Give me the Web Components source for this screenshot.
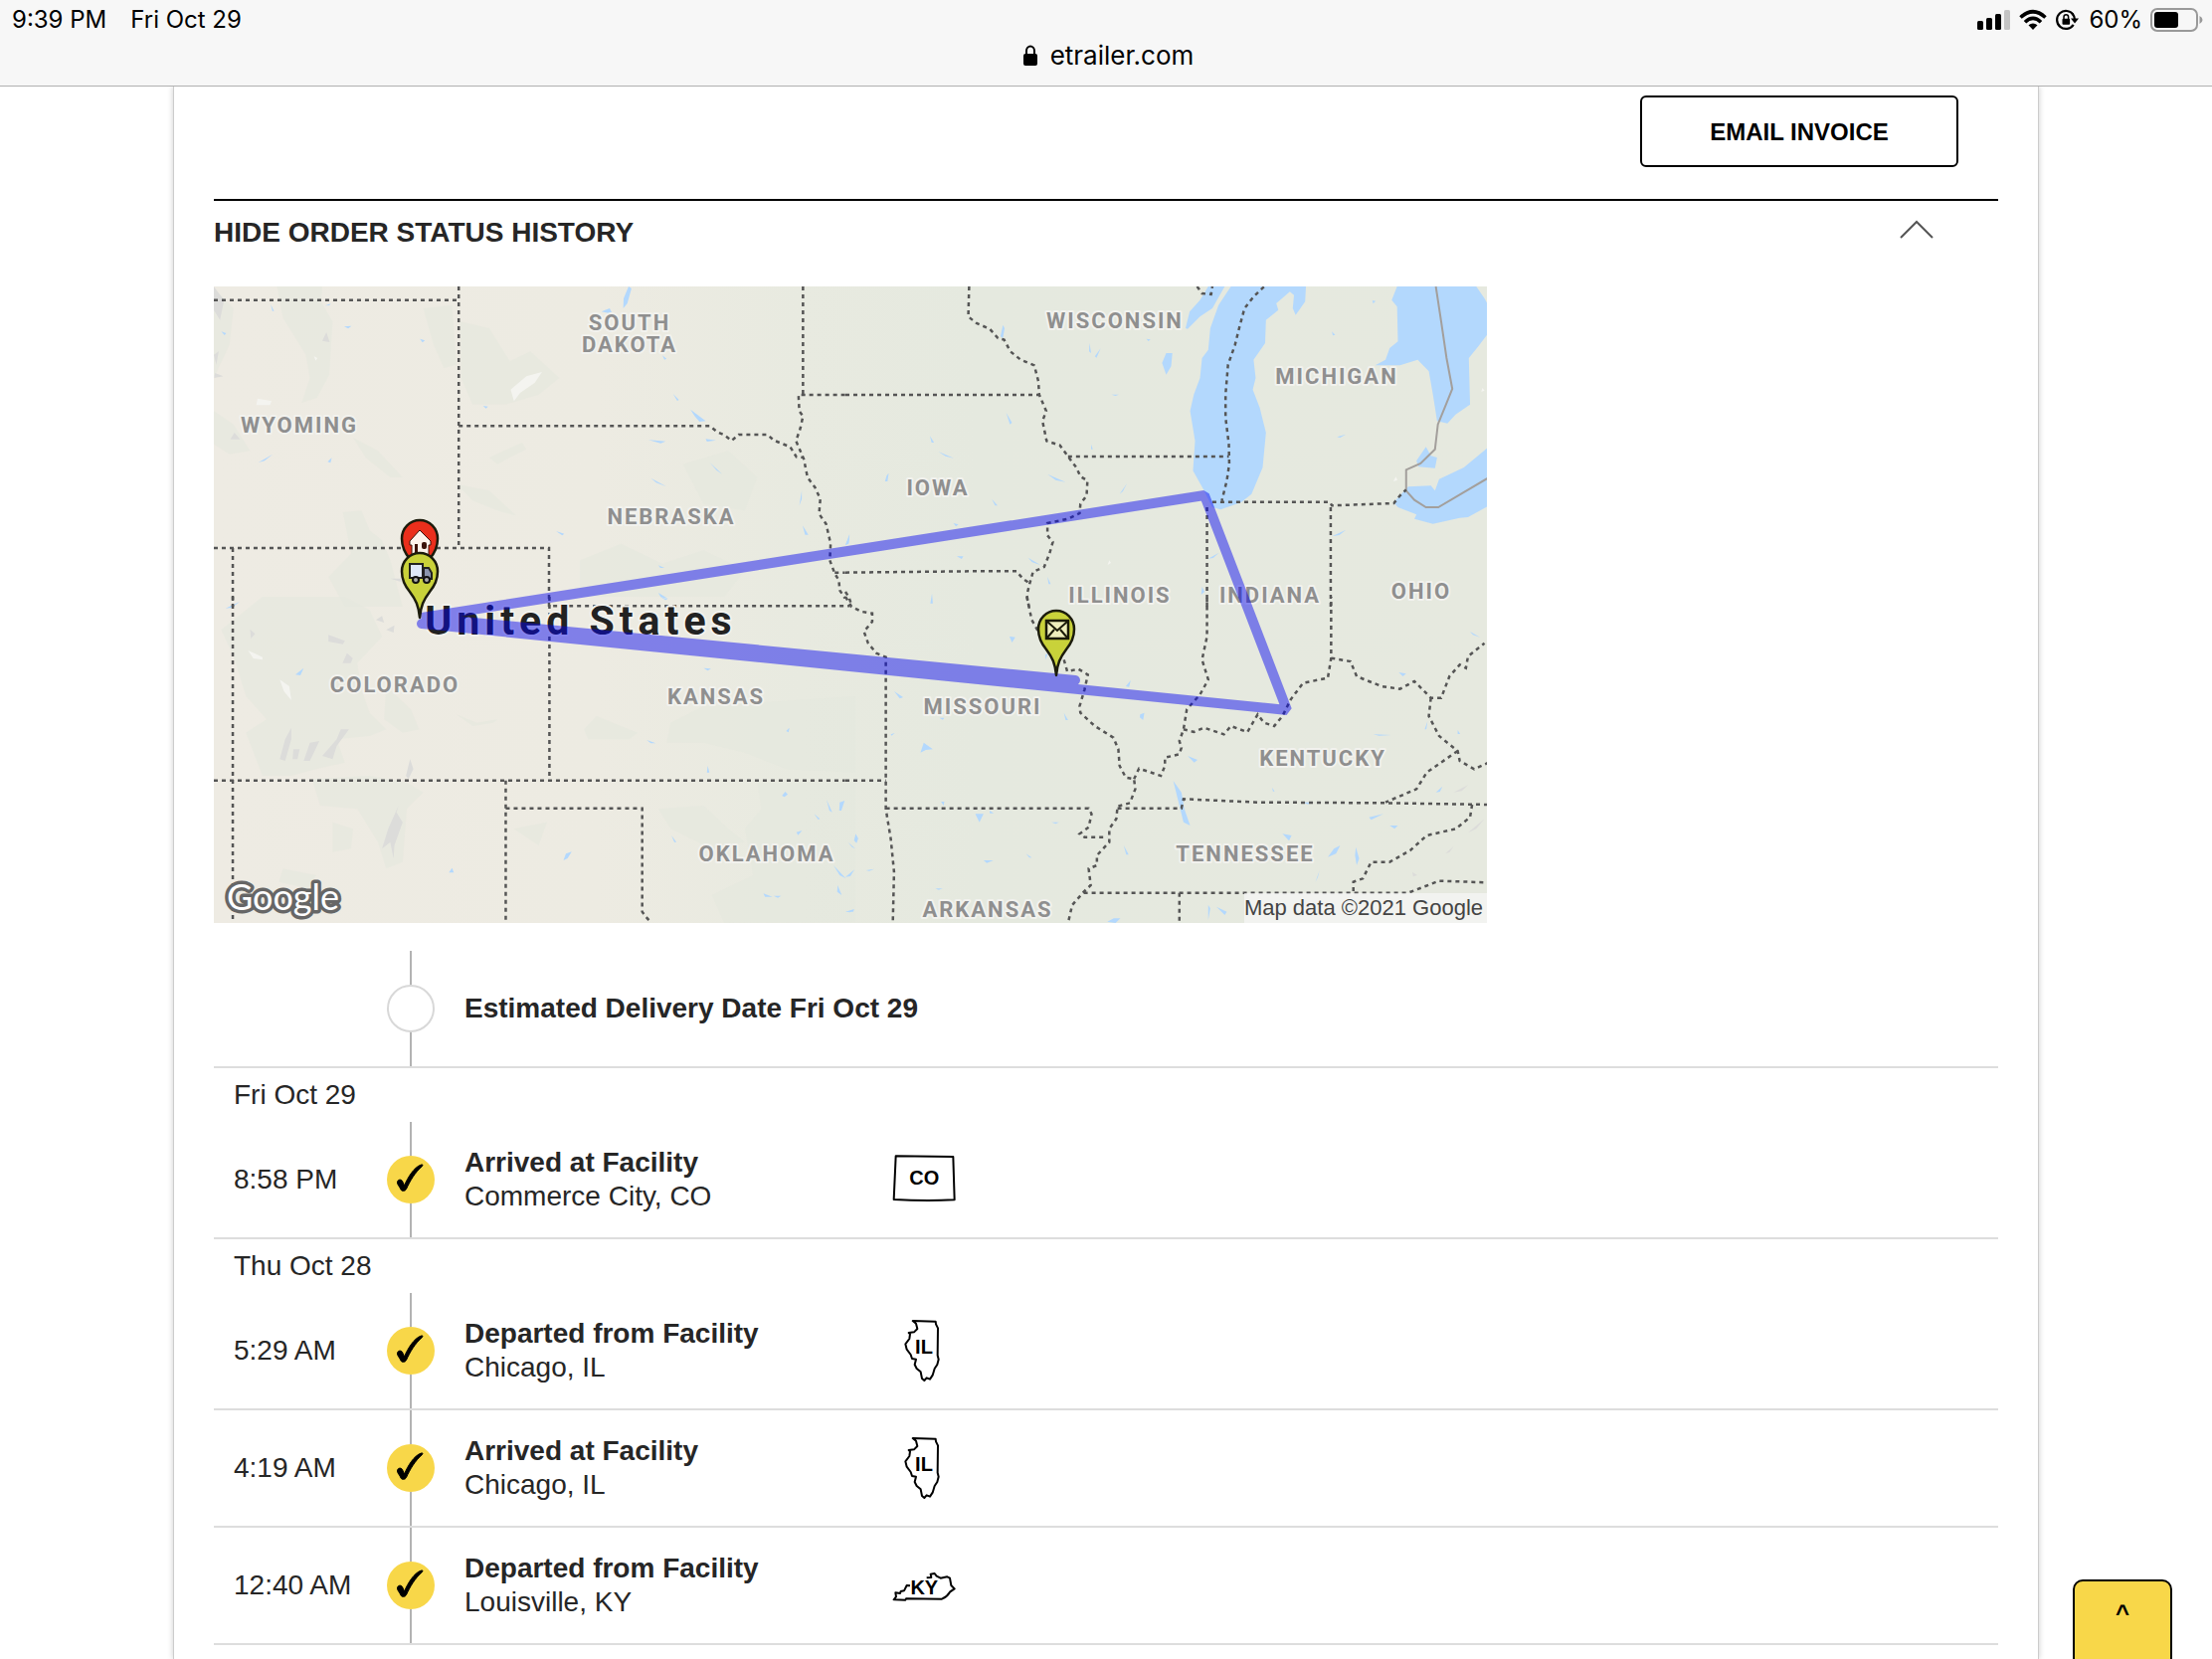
<!DOCTYPE html>
<html lang="en">
<head>
<meta charset="utf-8">
<meta name="viewport" content="width=device-width, initial-scale=1">
<title>Order status - etrailer.com</title>
<style>
  html, body { margin: 0; height: 100%; }
  body {
    display: flex; flex-direction: column; min-height: 100vh; overflow: hidden;
    background: #fff; color: #262626;
    font: 28px/34px "Liberation Sans", Arial, sans-serif;
  }
</style>
</head>
<body>
<browser-bar time="9:39 PM" date="Fri Oct 29" battery="60%">etrailer.com</browser-bar>
<order-card>
  <invoice-button slot="actions">EMAIL INVOICE</invoice-button>
  <history-panel label="HIDE ORDER STATUS HISTORY">
    <route-map></route-map>
    <history-day>
      <history-event pending heading="Estimated Delivery Date Fri Oct 29"></history-event>
    </history-day>
    <history-day date="Fri Oct 29">
      <history-event time="8:58 PM" heading="Arrived at Facility" state="CO">Commerce City, CO</history-event>
    </history-day>
    <history-day date="Thu Oct 28">
      <history-event time="5:29 AM" heading="Departed from Facility" state="IL">Chicago, IL</history-event>
      <history-event time="4:19 AM" heading="Arrived at Facility" state="IL">Chicago, IL</history-event>
      <history-event time="12:40 AM" heading="Departed from Facility" state="KY">Louisville, KY</history-event>
    </history-day>
  </history-panel>
</order-card>
<back-to-top></back-to-top>

<script>
class Base extends HTMLElement {
  connectedCallback() {
    if (!this.shadowRoot) this.attachShadow({ mode: 'open' }).innerHTML = this.render();
  }
  attr(name) { return this.getAttribute(name) || ''; }
}

customElements.define('browser-bar', class extends Base {
  render() {
    return `
<style>
  :host { display: block; flex: none; box-sizing: border-box; height: 87px; background: #f7f7f7;
    border-bottom: 1px solid #b0b0b0; color: #000; font-family: Inter, sans-serif; }
  .status { display: flex; align-items: center; justify-content: space-between; height: 40px; padding: 0 8px 0 12px; font-size: 24px; line-height: 30px; }
  .left { display: flex; gap: 24px; }
  .right { display: flex; align-items: center; gap: 8px; }
  .pct { margin-left: 2px; }
  .address { display: flex; align-items: center; justify-content: center; gap: 12px; height: 32px; padding-left: 4px; font-size: 26px; line-height: 32px; }
  svg { display: block; }
</style>
<div class="status">
  <div class="left"><span>${this.attr('time')}</span><span>${this.attr('date')}</span></div>
  <div class="right">
    <svg width="34" height="22" viewBox="0 0 34 22"><rect x="0" y="12" width="6" height="9" rx="1.500"/><rect x="9" y="9" width="6" height="12" rx="1.500"/><rect x="18" y="5" width="6" height="16" rx="1.500"/><rect x="27" y="1" width="6" height="20" rx="1.500" fill="#c4c4c4"/></svg>
    <svg width="28" height="22" viewBox="0 0 28 22" fill="none" stroke="#000" stroke-width="3.600"><path d="M1.500 8.500Q14-3 26.500 8.500M6 13.200Q14 5.500 22 13.200"/><path d="M14 21 9.500 16.300Q14 12.500 18.500 16.300Z" fill="#000" stroke="none"/></svg>
    <svg width="24" height="22" viewBox="0 0 24 22"><path d="M18.500 5.800A9 9 0 1 0 18.700 15.800" fill="none" stroke="#000" stroke-width="2.200"/><path d="M16 9.500h8l-4 5z"/><path d="M19.900 10.500A9 9 0 0 0 17.600 4.800" fill="none" stroke="#000" stroke-width="2.200"/><rect x="7.500" y="9.800" width="7.600" height="6" rx="1"/><path d="M9 10V8a2.300 2.300 0 0 1 4.600 0v2" fill="none" stroke="#000" stroke-width="1.500"/></svg>
    <span class="pct">${this.attr('battery')}</span>
    <svg width="54" height="26" viewBox="0 0 54 26"><rect x="1" y="2" width="46" height="22" rx="6" fill="none" stroke="#999" stroke-width="2"/><rect x="4" y="5" width="24" height="16" rx="3"/><path d="M49.500 9q3 1.500 3 4t-3 4z" fill="#999"/></svg>
  </div>
</div>
<div class="address">
  <svg width="16" height="22" viewBox="0 0 16 22"><rect x="1" y="9" width="14" height="12" rx="2"/><path d="M4 10V6a4 4.500 0 0 1 8 0v4" fill="none" stroke="#000" stroke-width="2"/></svg>
  <slot></slot>
</div>`;
  }
});

customElements.define('order-card', class extends Base {
  render() {
    return `
<style>
  :host { display: block; flex: 1 0 auto; box-sizing: border-box; width: calc(100% - 348px); margin: 0 auto; padding: 9px 40px 0;
    border: solid #ccc; border-width: 0 1px; box-shadow: 0 0 6px rgba(0,0,0,.2); clip-path: inset(0 -10px); }
  .actions { display: flex; justify-content: flex-end; padding: 0 40px 32px; }
</style>
<div class="actions"><slot name="actions"></slot></div>
<slot></slot>`;
  }
});

customElements.define('invoice-button', class extends Base {
  render() {
    return `
<style>
  :host { display: block; }
  button { display: block; width: 320px; height: 72px; padding: 2px 0 0; border: 2px solid #000; border-radius: 6px; background: #fff;
    color: #000; font: bold 24px/30px "Liberation Sans", Arial, sans-serif; }
</style>
<button type="button"><slot></slot></button>`;
  }
});

customElements.define('history-panel', class extends Base {
  render() {
    return `
<style>
  :host { display: block; border-top: 2px solid #000; }
  button { display: flex; justify-content: space-between; align-items: center; width: 100%; padding: 15px 65px 37px 0; border: 0;
    background: none; color: inherit; font: bold 28px/34px "Liberation Sans", Arial, sans-serif; text-align: left; }
  svg { display: block; }
</style>
<button type="button" aria-expanded="true">${this.attr('label')}
  <svg width="34" height="28" viewBox="0 0 34 28" fill="none" stroke="#555" stroke-width="2"><path d="M1 19 17 3 33 19"/></svg>
</button>
<slot></slot>`;
  }
});

customElements.define('route-map', class extends Base {
  render() {
    const sx = 650 / 1568, sy = 1 / 3;
    const sheets = {
      nw: { at: [-5, -8],
        borders: 'M12 65H606M606 24V814M606 445H1215L1232 462 1250 472 1268 489 1285 471 1355 471 1370 488 1410 508 1425 538 1443 540M1441 24V350M1543 351H1430L1432 400 1441 415 1435 450 1424 490 1443 545 1452 600 1470 630 1483 665 1480 710 1497 740 1508 800 1506 850 1518 890 1528 910 1530 940 1543 965M12 813H825V990M58 813V990M1518 887H1543M835 988H1555',
        green: 'M165 24L275 24 272 70 300 130 292 290 262 360 225 375 245 300 235 230 180 120ZM520 90L590 80 600 260 570 270 545 200ZM610 130L680 150 730 250 780 220 850 300 800 350 720 380 640 380 612 300ZM350 480L410 520 470 600 440 600 380 540ZM600 620L680 640 745 715 700 700 640 670ZM680 540L760 495 770 515 700 560ZM325 705L370 700 390 760 420 790 440 850 470 990 330 990 290 900 345 830ZM12 30L60 90 50 200 12 300ZM12 400L60 440 100 520 50 530 12 500ZM900 850L1000 800 1100 860 1200 820 1300 880 1250 960 900 960ZM1150 560L1260 520 1330 600 1300 700 1200 680Z',
        snow: 'M808 282L770 295 732 335 740 370 755 345 790 315ZM118 362L152 370 148 382 115 382ZM255 235l8 5-4 8z',
        grey: 'M285 162l8 30-18-4zM62 465l14 20-24 0zM12 25l25 40-10 60-15-30zM12 230l12-10-6 40zM15 285l20 10-22 5zM440 905h26v10z',
        water: 'M1018 24L1025 30 1015 75 1005 90 1006 60ZM952 100l20-10 5 12-8 2zM1100 232l10 10-5 3zM30 160l12 5-4 6zM150 78l8 20-4 0zM282 82l14-6-4 5zM328 145l18-2-8 8zM512 182l12 5-6 6zM665 384l12 2-5 6zM1126 348l14 18-4 3zM1168 395L1205 430 1190 432 1178 415ZM1066 487l42 4-12 6zM1205 484l25 4-22 4zM120 555l35-25-20 20zM288 553l10-12-3 15zM1072 602l38 26-25-12zM1215 555l30 35-14-12zM1438 640l0 25-6 20zM1440 745l14 28-8 0zM1554 775l-2 22-8 6zM842 762l20 8-5 5zM1090 865l15 8-10 0zM1090 948l24 18-18-5z' },
      ne: { at: [635, -8],
        borders: 'M0 351H472M300 24L298 115 318 135 350 152 370 180 385 185 400 220 425 245 458 262 468 310 470 350 487 400 478 430 488 490 520 503 540 537 560 570 570 597 587 610 585 655 570 680 568 708 540 725 490 738 490 775 503 795 495 830 482 870 455 885 447 920 440 955 445 990M540 537H930M1015 25L990 55 968 90 955 150 945 200 928 260 922 350 922 420 930 500 931 560 925 610 913 670M890 674H1175L1180 685 1330 678 1345 655 1360 637M877 690V990M1177 690V990M0 887L305 883H415L430 905 447 920M853 24L865 45 887 48 890 24M0 945L8 960 15 985',
        coast: 'M1432 24L1445 130 1458 240 1472 333 1455 385 1437 440 1430 515 1395 558 1360 577 1360 640 1380 668 1408 690H1438L1568 595',
        water: 'M935 24H1117L1115 70 1092 110 1085 90 1088 50 1078 40 1045 75 1050 95 1020 125 1018 195 990 245 995 300 988 335 1005 390 1020 465 1012 570 985 650 960 675 910 697 890 690 870 640 843 580 848 490 836 400 845 350 860 300 865 240 880 215 885 150 905 80ZM880 24H920L890 90 860 115 830 152 825 150 835 100 860 65ZM1338 24H1530L1550 60 1568 100V150L1535 205 1512 240 1515 380 1480 410 1460 437 1435 430 1425 350 1415 280 1388 245 1345 262H1285L1310 245 1320 210 1340 190 1338 85 1325 65ZM1408 508L1420 535 1435 540 1430 572 1390 568 1385 550ZM1365 628L1420 625 1430 640 1440 605 1500 570 1568 500V680L1510 720 1490 722 1425 740 1380 725 1385 712 1340 690 1330 675ZM778 225L793 225 790 265 778 290 768 255ZM1278 66l8 2-6 8zM1180 160l8 10-6 2zM730 182l10 2-5 5zM605 235l14-24-10 28zM592 195l4 30-5-5zM645 350l18 0-8 4zM382 140l4 10-4 30-6-5zM390 405l14 30-5 5zM205 475l10 20-6 0zM100 595l5-8-3 25-6 0zM225 522l38 20-20-6zM490 590l44 24-24-6zM665 650l18-32-10 24zM596 500l4 15-4 0zM1192 478l22-8-14 10zM1180 778l34-20-16 16zM10 770l-2 30-8 5zM262 738l12 4-6 6zM270 838l16 0-4 8zM355 665l14 20-6 0zM490 900l8 22-5 0zM880 845l26-18-14 16zM443 842l30 22-20-8zM210 950l2 30-6 0zM865 930l6 15-8 8z',
        grey: '', snow: 'M1545 330l5 8-8 4zM1335 598l4 10-10 4zM640 850l4 8-8 6z', green: '' },
      sw: { at: [-5, 312],
        borders: 'M58 0V984M826 0V554M12 554H1543M720 554V984M720 638H1051V950L1060 965 1073 984',
        green: 'M130 0L330 0 390 40 420 120 360 200 370 280 390 350 430 400 390 420 310 430 330 500 260 520 200 540 130 540 90 410 140 370 90 300 60 180 30 100ZM430 270L490 340 510 400 470 410 425 370ZM250 550L390 540 480 560 520 590 480 640 470 800 430 820 410 740 360 640 270 630ZM300 680L350 700 345 760 300 770ZM910 400L940 360 1040 410 1020 430 920 430ZM1120 380L1200 330 1330 320 1568 300V530L1400 520 1300 470 1200 440 1110 440ZM1330 560L1568 560V980L1250 984 1220 900 1320 840 1300 700 1340 640ZM1090 640L1200 630 1260 700 1300 740 1220 760 1120 700ZM740 700L820 680 800 750ZM600 355L650 380 700 370 690 380 640 390ZM180 820L260 840 240 880 170 860Z',
        snow: 'M95 162L130 182 130 190 108 186ZM172 250L195 270 200 312 182 285Z',
        grey: 'M335 170l14 15-5 15-20 0zM405 70l15-12 5 20zM290 115l40 18-5 10-35-8zM430 100l20-14-2 22zM100 98l12 14-10 14zM172 490L185 430 200 395 200 430 185 495ZM230 495L245 440 268 435 245 495ZM275 480L310 430 320 400 340 400 310 450 300 490ZM488 490l8 30-12 30-6-10zM460 630L455 650 470 680 450 750 448 790 440 740 420 760 435 700ZM205 460l15 0-5 30-12 0z',
        water: 'M210 235l20-20-8 22zM40 35l35-20-20 18zM1200 215l18 2-8 6zM1400 405l8-10-2 14zM1062 432l22 10-12 0zM1210 510l4 20-6 0zM1390 600l8-12 6 8-8 8zM1498 612L1512 650 1505 645ZM1530 620l12-5-8 30-5 0zM1468 655l14 15-4 2zM1425 710l14-5-10 14zM1122 720l12 20-5 0zM860 795l6-20 14-6-10 20zM582 832l8-14 4 14zM1515 810L1545 850 1530 840ZM1525 870L1535 900 1524 890ZM1345 895l22 10-18 0zM1370 902l18 0-8 6zM1545 950l20-8-2 8zM1550 740l18 20-8-5zM1095 0l18 8-6 2z' },
      se: { at: [635, 312],
        borders: 'M0 554H98M0 0L15 30 40 45 65 50 65 75 45 105 55 140 75 170 98 182V640L110 730 118 830 115 984M98 638H590L597 655 590 695 568 715 580 725H635M440 0L452 70 470 110M530 190L538 225 565 218 588 235 580 280 568 330 570 350 605 390 650 425 662 460 665 510 680 545 700 550 703 580 690 622 660 632 657 670 640 700 640 740 610 780 610 810 590 820 595 870 578 890 550 930 540 984M700 550L712 518 765 540 775 510 775 485 810 475 815 455 810 435 820 400 828 340 860 295 880 250 865 190 877 120V0M820 400L845 408 870 395 918 415 935 390 975 408 1000 355 1015 380 1040 390 1060 360 1080 310 1110 260 1170 245 1178 185V0M1178 185L1225 195 1240 240 1300 270 1345 278 1380 255 1420 305 1445 305 1465 240 1490 205 1505 215 1510 180 1550 140M1420 305L1415 360 1440 420 1485 465 1490 495 1525 520 1560 500M1485 465L1410 530 1385 580 1310 620M660 638H815L820 610 1000 620 1310 622 1560 627M1520 627L1515 665 1480 700 1410 720 1370 765 1320 800 1275 800 1255 850 1232 860 1232 892M578 893H1365L1440 857 1560 862M810 893V984',
        green: '', snow: '',
        grey: 'M1475 590l35-22-15 18zM1510 712L1550 670 1530 700ZM1455 775l20-22-10 18zM1375 830l12 10-10 4z',
        water: 'M182 470L190 440 212 460 195 462ZM715 355l10-5-3 22-8-8zM398 120l14 2-8 16zM118 285l22 18-8 4zM680 270l12-18-4 20zM795 555L815 590 822 640 836 690 820 680 812 640ZM530 350l10 22-6 0zM830 480l24 12-8 8zM1342 228l18 4-8 8zM1060 715l22 5-6 16zM1170 785L1185 760 1200 750 1190 775ZM1238 755L1246 790 1240 810 1236 780ZM1140 860l10-35-4 20zM1270 665l35-10-30 18zM1320 690l20 0-8 10zM675 750l12 28-6 0zM315 655L335 655 325 680ZM350 645l10 8-10 0zM500 680l18 0-8 5zM232 618l8 0-2 12zM25 715l6 14-4 14-6-8zM0 845l22-22-10 20zM50 825l20-4-12 6zM335 795l24 0-16 8zM548 830l-5 20zM438 775l14 12-6 0zM218 880l18 0-10 4zM0 950l20-6-8 8zM635 980l16-10 16 0-12 14zM880 930l5 10-5 35zM900 935L925 950 920 960ZM1110 620l20 0-8 6zM1280 415l44 2-30 2zM1412 375l-3 25-4 0zM1035 575l6 12-4 0zM1515 105l25 18-18-8zM1432 590l16-18-6 16zM485 190l0-15 6-3zM1485 402l6 12-6 0zM110 415l10-4-8 8zM228 365l12 0-4 6z' }
    };
    const layer = (key, attrs) => Object.values(sheets).map(s => s[key]
      ? `<g transform="translate(${s.at}) scale(${sx} ${sy})"><path d="${s[key]}" ${attrs}/></g>` : '').join('');
    const labels = [
      ['WYOMING', 86, 147], ['SOUTH', 418, 44], ['DAKOTA', 418, 66], ['NEBRASKA', 460, 239], ['WISCONSIN', 906, 42],
      ['MICHIGAN', 1129, 98], ['IOWA', 728, 210], ['ILLINOIS', 911, 318], ['INDIANA', 1062, 318], ['OHIO', 1214, 314],
      ['COLORADO', 182, 408], ['KANSAS', 505, 420], ['OKLAHOMA', 556, 578], ['MISSOURI', 773, 430], ['KENTUCKY', 1115, 482],
      ['TENNESSEE', 1037, 578], ['ARKANSAS', 778, 634]
    ];
    const pin = (x, y, fill, icon) => `<g transform="translate(${x} ${y})"><path d="M0 0C-1-12-4-18-10-26C-15-32-18-38-18-46.500A18 18.500 0 0 1 18-46.500C18-38 15-32 10-26C4-18 1-12 0 0Z" fill="${fill}" stroke="#1c1c0c" stroke-width="2.500" stroke-linejoin="round"/>${icon}</g>`;
    const house = '<path d="M0-55 11-44V-40H9V-30H-8V-40H-10V-44Z" fill="#fdf3ec" stroke="#3a1208" stroke-width="1"/><path d="M-5-41h3v10h-3z" fill="#3a1208"/><rect x="2" y="-43" width="5" height="7" rx="2" fill="#3a1208"/>';
    const truck = '<path d="M-10-54H3V-40H-10Z" fill="#dfe8f8" stroke="#222" stroke-width="2"/><path d="M4-50H9L12-45V-39H4Z" fill="#8b95ad" stroke="#222" stroke-width="2"/><circle cx="-4" cy="-38" r="3" fill="#aaa" stroke="#111" stroke-width="2"/><circle cx="7" cy="-38" r="3" fill="#aaa" stroke="#111" stroke-width="2"/>';
    const mail = '<rect x="-10" y="-55" width="22" height="18" fill="#eeeebc" stroke="#1a1a08" stroke-width="2.500"/><path d="M-9-54 1-45 11-54M-9-38-2-46M11-38 4-46" fill="none" stroke="#1a1a08" stroke-width="2"/>';
    return `
<style>
  :host { display: block; width: 1280px; max-width: 100%; margin-bottom: 28px; }
  svg { display: block; width: 100%; height: auto; }
  .border { fill: none; stroke: #555; stroke-width: 2.500px; stroke-dasharray: 4 4; vector-effect: non-scaling-stroke; }
  .coast { fill: none; stroke: #a39f9c; stroke-width: 2px; vector-effect: non-scaling-stroke; }
  .label { font: 700 22px Roboto, sans-serif; letter-spacing: 2px; text-anchor: middle; fill: #8f8f8f; stroke: #f2f2ee; stroke-width: 4px; stroke-linejoin: round; paint-order: stroke; }
  .country { font: 700 41px Roboto, sans-serif; letter-spacing: 5px; text-anchor: middle; fill: #222; stroke: #f2f2ee; stroke-width: 4px; stroke-linejoin: round; paint-order: stroke; }
  .google { font: 36px Lato, sans-serif; fill: #fff; stroke: #666; stroke-width: 7px; stroke-linejoin: round; paint-order: stroke; }
  .credit { font: 22px "Liberation Sans", Arial, sans-serif; text-anchor: end; fill: #444; }
</style>
<svg viewBox="0 0 1280 640" role="img" aria-label="Shipment route map">
  <defs><linearGradient id="land"><stop offset="0" stop-color="#eeebe3"/><stop offset=".3" stop-color="#edebe2"/><stop offset=".46" stop-color="#e8eae0"/><stop offset=".6" stop-color="#e5e9df"/><stop offset="1" stop-color="#e6e9df"/></linearGradient></defs>
  <rect width="1280" height="640" fill="url(#land)"/>
  ${layer('green', 'fill="#e4e8de" opacity=".6"')}
  ${layer('snow', 'fill="#f4f4f0"')}
  ${layer('grey', 'fill="#dcdcda"')}
  ${layer('water', 'fill="#b3d8fd"')}
  ${layer('coast', 'class="coast"')}
  ${layer('borders', 'class="border"')}
  ${labels.map(([t, x, y]) => `<text class="label" x="${x}" y="${y}">${t}</text>`).join('')}
  <text class="country" x="369" y="350">United States</text>
  <path d="M866 396 209 333 996 210 1079 426 209 339" fill="none" stroke="#0000f0" stroke-opacity=".46" stroke-width="10" stroke-linejoin="bevel" stroke-linecap="round"/>
  ${pin(207, 300, '#ea2f1c', house)}
  ${pin(207, 333, '#c9d23a', truck)}
  ${pin(847, 391, '#c9d23a', mail)}
  <text class="google" x="13" y="627">Google</text>
  <rect x="1036" y="610" width="244" height="30" fill="#f5f5f5" fill-opacity=".75"/>
  <text class="credit" x="1276" y="632">Map data ©2021 Google</text>
</svg>`;
  }
});

customElements.define('history-day', class extends Base {
  render() {
    const date = this.attr('date');
    return `
<style>
  :host { display: block; }
  .date { padding: 10px 20px; }
</style>
${date ? `<div class="date">${date}</div>` : ''}
<slot></slot>`;
  }
});

const STATE_SHAPES = {
  CO: ['M11 25 184 27 188 157Q100 161 5 156Z', 97, 111],
  IL: ['M62 6 131 8 132 16 138 28 137 110 140 122 136 138 128 150 122 170 114 182 104 178 97 186 90 180 86 160 74 150 68 138 72 122 60 120 56 108 44 92 40 76 52 60 54 46 50 42 66 40 76 30 72 14Z', 96, 104],
  KY: ['M54 97 44 96 36 112 26 114 24 120 10 118 12 130 5 139 40 140 42 136 150 137Q166 130 174 116L188 106 178 96 174 74 166 70 146 74 134 68 128 60 116 62 118 72 104 73', 97, 124]
};
customElements.define('history-event', class extends Base {
  render() {
    const shape = STATE_SHAPES[this.attr('state')];
    const pending = this.hasAttribute('pending');
    return `
<style>
  :host { display: grid; grid-template-columns: 154px 48px 460px 64px; align-items: center; height: 116px; padding-left: 20px; border-bottom: 2px solid #ddd; }
  .rail { display: flex; flex-direction: column; align-items: center; align-self: stretch; }
  .rail::before, .rail::after { content: ""; flex: 1; width: 2px; background: #b3b3b3; }
  .dot { box-sizing: border-box; width: 48px; height: 48px; border-radius: 50%; background: #f8d749; }
  .dot.pending { border: 2px solid #d8d8d8; background: #fff; }
  .text { padding-left: 30px; white-space: nowrap; }
  b { display: block; }
  svg { display: block; }
  text { font: bold 60px "Liberation Sans", Arial, sans-serif; text-anchor: middle; fill: #000; }
</style>
<span>${this.attr('time')}</span>
<div class="rail"><div class="dot${pending ? ' pending' : ''}">${pending ? '' : '<svg width="48" height="48" viewBox="0 0 48 48"><path stroke="#000" stroke-linejoin="round" d="M10.500 27C10.500 23.500 15 23 16 26.500L17.500 30C21 22 27 11.500 34.500 9C36 8.600 36.500 9.500 35.500 10.500C28 17 23.500 25 19.500 33.500C18.500 35.800 14.800 36 14 34C13 31 10.500 29.500 10.500 27Z"/></svg>'}</div></div>
<div class="text"><b>${this.attr('heading')}</b><slot></slot></div>
${shape ? `<svg width="64" height="64" viewBox="0 0 192 192"><path d="${shape[0]}" fill="none" stroke="#000" stroke-width="6" stroke-linejoin="round"/><text x="${shape[1]}" y="${shape[2]}">${this.attr('state')}</text></svg>` : ''}`;
  }
});

customElements.define('back-to-top', class extends Base {
  render() {
    return `
<style>
  :host { display: block; position: fixed; right: 40px; bottom: -20px; }
  button { display: block; box-sizing: border-box; width: 100px; height: 100px; padding: 0 0 32px; border: 2px solid #000; border-radius: 10px;
    background: #f8d749; color: #000; font: bold 24px/30px "Liberation Sans", Arial, sans-serif; }
</style>
<button type="button" aria-label="Back to top">^</button>`;
  }
});
</script>
</body>
</html>
